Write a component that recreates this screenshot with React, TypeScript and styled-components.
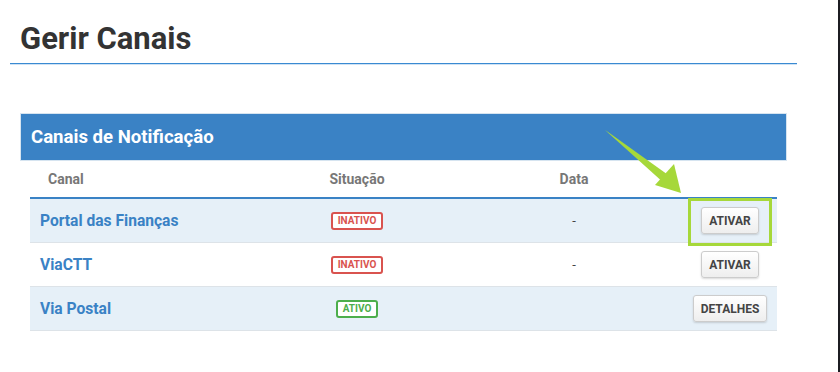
import styled, { createGlobalStyle } from 'styled-components';

const GlobalStyle = createGlobalStyle`
  html, body {
    margin: 0;
    padding: 0;
    background: #fff;
    font-family: Roboto, 'Liberation Sans', sans-serif;
  }
`;

const Page = styled.div`
  position: relative;
  box-sizing: border-box;
  width: 840px;
  height: 372px;
  padding: 0 0 0 10px;
  border-right: 2px solid #1c1c22;
  overflow: hidden;
`;

const Title = styled.h1`
  margin: 0;
  padding: 21px 0 0 10px;
  height: 42px;
  font-size: 31px;
  line-height: 36px;
  font-weight: 700;
  color: #333;
`;

const Rule = styled.div`
  width: 787px;
  height: 1px;
  background: #3a8ad2;
  box-shadow: 0 1px 0 #cfe2f4;
`;

const Panel = styled.section`
  margin: 49px 0 0 10px;
  width: 767px;
`;

const PanelHeader = styled.div`
  box-sizing: border-box;
  height: 48px;
  padding: 0 10px;
  display: flex;
  align-items: center;
  background: #3a82c5;
  border: 1px solid #d6e4f0;
  color: #fff;
  font-size: 18.6px;
  font-weight: 700;
`;

const Table = styled.div`
  margin: 0 10px;
  width: 747px;
`;

const Row = styled.div<{ $shaded?: boolean; $head?: boolean }>`
  display: grid;
  grid-template-columns: 219px 216px 218px 94px;
  align-items: center;
  height: ${p => (p.$head ? '36px' : '43px')};
  background: ${p => (p.$shaded ? '#e6f0f8' : '#fff')};
  border-bottom: ${p => (p.$head ? '2px solid #3a82c5' : '1px solid #dde3e8')};
`;

const HeadCell = styled.div<{ $center?: boolean }>`
  padding-left: ${p => (p.$center ? '0' : '18px')};
  text-align: ${p => (p.$center ? 'center' : 'left')};
  font-size: 14px;
  font-weight: 700;
  color: #777;
`;

const Name = styled.div`
  padding-left: 10px;
  font-size: 15.6px;
  font-weight: 700;
  color: #3a82c5;
`;

const Cell = styled.div`
  display: flex;
  justify-content: center;
  font-size: 13px;
  color: #444;
`;

const Badge = styled.span<{ $active?: boolean }>`
  box-sizing: border-box;
  height: 18px;
  padding: 0 5px;
  display: inline-flex;
  align-items: center;
  border: 2px solid ${p => (p.$active ? '#4cae4c' : '#d9534f')};
  border-radius: 3px;
  background: #fff;
  color: ${p => (p.$active ? '#4cae4c' : '#d9534f')};
  font-size: 10px;
  font-weight: 700;
`;

const Button = styled.button`
  box-sizing: border-box;
  height: 27px;
  padding: 0 7px;
  border: 1px solid #ccc;
  border-radius: 3px;
  background: linear-gradient(#fff, #eee);
  box-shadow: 0 1px 2px rgba(0, 0, 0, 0.15);
  font-family: Roboto, 'Liberation Sans', sans-serif;
  font-size: 12px;
  font-weight: 700;
  color: #444;
`;

const Highlight = styled.div`
  position: absolute;
  left: 688px;
  top: 198px;
  width: 84px;
  height: 48px;
  box-sizing: border-box;
  border: 3px solid #a6d83a;
  pointer-events: none;
`;

const Arrow = styled.svg`
  position: absolute;
  left: 600px;
  top: 125px;
  pointer-events: none;
`;

const channels = [
  { name: 'Portal das Finanças', active: false, action: 'ATIVAR' },
  { name: 'ViaCTT', active: false, action: 'ATIVAR' },
  { name: 'Via Postal', active: true, action: 'DETALHES' },
];

export default function App() {
  return (
    <Page>
      <GlobalStyle />
      <Title>Gerir Canais</Title>
      <Rule />
      <Panel>
        <PanelHeader>Canais de Notificação</PanelHeader>
        <Table>
          <Row $head>
            <HeadCell>Canal</HeadCell>
            <HeadCell $center>Situação</HeadCell>
            <HeadCell $center>Data</HeadCell>
            <HeadCell $center />
          </Row>
          {channels.map((c, i) => (
            <Row key={c.name} $shaded={i % 2 === 0}>
              <Name>{c.name}</Name>
              <Cell>
                <Badge $active={c.active}>{c.active ? 'ATIVO' : 'INATIVO'}</Badge>
              </Cell>
              <Cell>{c.active ? '' : '-'}</Cell>
              <Cell>
                <Button>{c.action}</Button>
              </Cell>
            </Row>
          ))}
        </Table>
      </Panel>
      <Highlight />
      <Arrow width="90" height="75" viewBox="0 0 90 75">
        <polygon points="5,5 8,7 71,52 65,59" fill="#a6d83a" />
        <polygon points="81,68 55,60 74,39" fill="#a6d83a" />
      </Arrow>
    </Page>
  );
}
